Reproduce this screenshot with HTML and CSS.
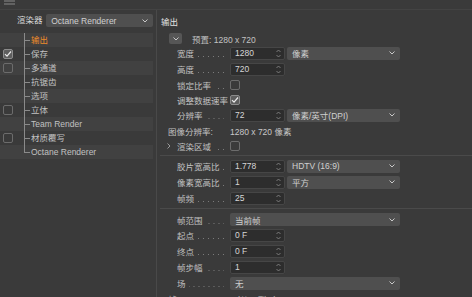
FILE: index.html
```html
<!DOCTYPE html>
<html>
<head>
    <title>渲染设置</title>
    <link rel="stylesheet" href="styles.css">
</head>
<body>
    <div class="topbar">
        <svg class="menu-icon" width="12" height="6" viewBox="0 0 12 6"><path d="M0 1H11M0 4H11" stroke="#8a8a8a" stroke-width="1"/></svg>
    </div>
    <div class="main">
        <div class="side">
            <div class="renderer">
                <span class="renderer-label">渲染器</span>
                <div class="select renderer-select">
                    <span>Octane Renderer</span>
                    <svg class="chev" width="6" height="4" viewBox="0 0 6 4"><path d="M0.5 0.5L3 3L5.5 0.5" fill="none" stroke="#c8c8c8"/></svg>
                </div>
            </div>
            <ul class="tree">
                <li class="tree-row"><span class="check-cell"></span><span class="node active">输出</span></li>
                <li class="tree-row"><span class="check-cell"><span class="checkbox checked"><svg width="8" height="8" viewBox="0 0 8 8"><path d="M1 4.2L3 6.2L7 1.5" fill="none" stroke="#ececec" stroke-width="1.2"/></svg></span></span><span class="node">保存</span></li>
                <li class="tree-row"><span class="check-cell"><span class="checkbox"></span></span><span class="node">多通道</span></li>
                <li class="tree-row"><span class="check-cell"></span><span class="node">抗锯齿</span></li>
                <li class="tree-row"><span class="check-cell"></span><span class="node">选项</span></li>
                <li class="tree-row"><span class="check-cell"><span class="checkbox"></span></span><span class="node">立体</span></li>
                <li class="tree-row"><span class="check-cell"></span><span class="node">Team Render</span></li>
                <li class="tree-row"><span class="check-cell"><span class="checkbox"></span></span><span class="node">材质覆写</span></li>
                <li class="tree-row last"><span class="check-cell"></span><span class="node">Octane Renderer</span></li>
            </ul>
        </div>

        <div class="panel">
            <div class="panel-title">输出</div>
            <div class="preset">
                <span class="preset-btn"><svg width="6" height="4" viewBox="0 0 6 4"><path d="M0.5 0.5L3 3L5.5 0.5" fill="none" stroke="#c8c8c8"/></svg></span>
                <span>预置: 1280 x 720</span>
            </div>

            <div class="row">
                <label class="lbl"><span>宽度</span><i class="dots"></i></label>
                <div class="num"><span>1280</span><svg class="spin" width="5" height="9" viewBox="0 0 5 9"><path d="M0.5 3L2.5 1L4.5 3M0.5 6L2.5 8L4.5 6" fill="none" stroke="#8e8e8e" stroke-width="0.8"/></svg></div>
                <div class="select"><span>像素</span><svg class="chev" width="6" height="4" viewBox="0 0 6 4"><path d="M0.5 0.5L3 3L5.5 0.5" fill="none" stroke="#c8c8c8"/></svg></div>
            </div>
            <div class="row">
                <label class="lbl"><span>高度</span><i class="dots"></i></label>
                <div class="num"><span>720</span><svg class="spin" width="5" height="9" viewBox="0 0 5 9"><path d="M0.5 3L2.5 1L4.5 3M0.5 6L2.5 8L4.5 6" fill="none" stroke="#8e8e8e" stroke-width="0.8"/></svg></div>
            </div>
            <div class="row short">
                <label class="lbl"><span>锁定比率</span><i class="dots"></i></label>
                <span class="checkbox"></span>
            </div>
            <div class="row short">
                <label class="lbl"><span>调整数据速率</span><i class="dots"></i></label>
                <span class="checkbox checked"><svg width="8" height="8" viewBox="0 0 8 8"><path d="M1 4.2L3 6.2L7 1.5" fill="none" stroke="#ececec" stroke-width="1.2"/></svg></span>
            </div>
            <div class="row">
                <label class="lbl"><span>分辨率</span><i class="dots"></i></label>
                <div class="num"><span>72</span><svg class="spin" width="5" height="9" viewBox="0 0 5 9"><path d="M0.5 3L2.5 1L4.5 3M0.5 6L2.5 8L4.5 6" fill="none" stroke="#8e8e8e" stroke-width="0.8"/></svg></div>
                <div class="select"><span>像素/英寸(DPI)</span><svg class="chev" width="6" height="4" viewBox="0 0 6 4"><path d="M0.5 0.5L3 3L5.5 0.5" fill="none" stroke="#c8c8c8"/></svg></div>
            </div>
            <div class="row short static">
                <span class="lbl">图像分辨率:</span>
                <span class="value">1280 x 720 像素</span>
            </div>
            <div class="row short toggle-row">
                <span class="toggle"><svg width="4" height="6" viewBox="0 0 4 6"><path d="M0.5 0.5L3 3L0.5 5.5" fill="none" stroke="#9a9a9a"/></svg></span>
                <label class="lbl"><span>渲染区域</span><i class="dots"></i></label>
                <span class="checkbox"></span>
            </div>

            <div class="sep"></div>

            <div class="row">
                <label class="lbl"><span>胶片宽高比</span><i class="dots"></i></label>
                <div class="num"><span>1.778</span><svg class="spin" width="5" height="9" viewBox="0 0 5 9"><path d="M0.5 3L2.5 1L4.5 3M0.5 6L2.5 8L4.5 6" fill="none" stroke="#8e8e8e" stroke-width="0.8"/></svg></div>
                <div class="select"><span>HDTV (16:9)</span><svg class="chev" width="6" height="4" viewBox="0 0 6 4"><path d="M0.5 0.5L3 3L5.5 0.5" fill="none" stroke="#c8c8c8"/></svg></div>
            </div>
            <div class="row">
                <label class="lbl"><span>像素宽高比</span><i class="dots"></i></label>
                <div class="num"><span>1</span><svg class="spin" width="5" height="9" viewBox="0 0 5 9"><path d="M0.5 3L2.5 1L4.5 3M0.5 6L2.5 8L4.5 6" fill="none" stroke="#8e8e8e" stroke-width="0.8"/></svg></div>
                <div class="select"><span>平方</span><svg class="chev" width="6" height="4" viewBox="0 0 6 4"><path d="M0.5 0.5L3 3L5.5 0.5" fill="none" stroke="#c8c8c8"/></svg></div>
            </div>
            <div class="row">
                <label class="lbl"><span>帧频</span><i class="dots"></i></label>
                <div class="num"><span>25</span><svg class="spin" width="5" height="9" viewBox="0 0 5 9"><path d="M0.5 3L2.5 1L4.5 3M0.5 6L2.5 8L4.5 6" fill="none" stroke="#8e8e8e" stroke-width="0.8"/></svg></div>
            </div>

            <div class="sep sep-2"></div>

            <div class="row short">
                <label class="lbl"><span>帧范围</span><i class="dots"></i></label>
                <div class="select wide"><span>当前帧</span><svg class="chev" width="6" height="4" viewBox="0 0 6 4"><path d="M0.5 0.5L3 3L5.5 0.5" fill="none" stroke="#c8c8c8"/></svg></div>
            </div>
            <div class="row">
                <label class="lbl"><span>起点</span><i class="dots"></i></label>
                <div class="num"><span>0 F</span><svg class="spin" width="5" height="9" viewBox="0 0 5 9"><path d="M0.5 3L2.5 1L4.5 3M0.5 6L2.5 8L4.5 6" fill="none" stroke="#8e8e8e" stroke-width="0.8"/></svg></div>
            </div>
            <div class="row">
                <label class="lbl"><span>终点</span><i class="dots"></i></label>
                <div class="num"><span>0 F</span><svg class="spin" width="5" height="9" viewBox="0 0 5 9"><path d="M0.5 3L2.5 1L4.5 3M0.5 6L2.5 8L4.5 6" fill="none" stroke="#8e8e8e" stroke-width="0.8"/></svg></div>
            </div>
            <div class="row">
                <label class="lbl"><span>帧步幅</span><i class="dots"></i></label>
                <div class="num"><span>1</span><svg class="spin" width="5" height="9" viewBox="0 0 5 9"><path d="M0.5 3L2.5 1L4.5 3M0.5 6L2.5 8L4.5 6" fill="none" stroke="#8e8e8e" stroke-width="0.8"/></svg></div>
            </div>
            <div class="row">
                <label class="lbl"><span>场</span><i class="dots"></i></label>
                <div class="select wide"><span>无</span><svg class="chev" width="6" height="4" viewBox="0 0 6 4"><path d="M0.5 0.5L3 3L5.5 0.5" fill="none" stroke="#c8c8c8"/></svg></div>
            </div>
            <div class="row static">
                <span class="lbl">帧:</span>
                <span class="value">1 (从 0 到 0)</span>
            </div>
        </div>
    </div>
</body>
</html>
```

FILE: styles.css
```css
body {
    margin: 0;
    padding: 0;
    width: 472px;
    height: 297px;
    overflow: hidden;
    background-color: #3a3a3a;
    color: #c2c2c2;
    font-family: "Liberation Sans", "Noto Sans CJK SC", sans-serif;
    font-size: 8.5px;
}

.topbar {
    height: 9px;
    border-bottom: 1px solid #434343;
}

.menu-icon {
    display: block;
    margin-left: 4px;
}

.main {
    display: flex;
    height: 287px;
}

/* left column: renderer choice and page tree */
.side {
    width: 153px;
    padding-right: 3px;
    border-right: 1px solid #494949;
}

.renderer {
    display: flex;
    align-items: flex-start;
    height: 19px;
    padding-top: 4px;
    padding-left: 17px;
}

.renderer-label {
    width: 29px;
    line-height: 13px;
    color: #dcdcdc;
}

.renderer-select {
    width: 89px;
    margin-left: 0;
    padding-left: 6px;
}

.tree {
    list-style: none;
    margin: 0;
    padding: 0;
}

.tree-row {
    display: flex;
    align-items: center;
    height: 14px;
}

.tree-row:nth-child(odd) {
    background-color: #414141;
}

.check-cell {
    display: flex;
    align-items: center;
    width: 24px;
    height: 14px;
    padding-left: 3px;
    box-sizing: border-box;
}

.node {
    position: relative;
    height: 14px;
    line-height: 14px;
    padding-left: 7px;
}

.node::before {
    content: "";
    position: absolute;
    left: 0;
    top: 0;
    bottom: 0;
    width: 1px;
    background-color: #8a8a8a;
}

.node::after {
    content: "";
    position: absolute;
    left: 0;
    top: 7px;
    width: 6px;
    height: 1px;
    background-color: #8a8a8a;
}

.last .node::before {
    bottom: 7px;
}

.node.active {
    color: #ee8b2b;
}

.checkbox {
    display: flex;
    align-items: center;
    justify-content: center;
    width: 10px;
    height: 10px;
    box-sizing: border-box;
    border: 1px solid #6c6c6c;
    border-radius: 2px;
}

.checkbox.checked {
    background-color: #5e5e5e;
    border-color: #8c8c8c;
}

/* right column: output settings */
.panel {
    flex: 1;
    padding-left: 4px;
}

.panel-title {
    height: 20px;
    line-height: 20px;
    padding-top: 2px;
    color: #e2e2e2;
}

.preset {
    display: flex;
    align-items: center;
    height: 13px;
    padding-left: 8px;
    gap: 10px;
}

.preset-btn {
    display: flex;
    align-items: center;
    justify-content: center;
    width: 13px;
    height: 11px;
    background-color: #565656;
    border-radius: 2px;
}

.row {
    display: flex;
    align-items: center;
    height: 16px;
    padding-left: 16px;
}

.row.short {
    height: 15px;
}

.lbl {
    display: flex;
    align-items: baseline;
    width: 53px;
    flex-shrink: 0;
    white-space: nowrap;
}

.dots {
    flex: 1;
    height: 1px;
    margin: 0 6px 0 3px;
    background-image: linear-gradient(to left, #7c7c7c 1px, transparent 1px);
    background-size: 5px 1px;
    background-position: right top;
    background-repeat: repeat-x;
}

.row.static {
    padding-left: 7px;
}

.row.static .lbl {
    width: 62px;
}

.toggle-row {
    padding-left: 2px;
}

.toggle {
    display: flex;
    align-items: center;
    width: 14px;
    padding-left: 4px;
    box-sizing: border-box;
}

.value {
    color: #c8c8c8;
}

.num {
    display: flex;
    align-items: center;
    justify-content: space-between;
    width: 55px;
    height: 13px;
    box-sizing: border-box;
    padding: 0 3px 0 4px;
    background-color: #2d2d2d;
    border: 1px solid #464646;
    border-radius: 2px;
    color: #d6d6d6;
}

.select {
    display: flex;
    align-items: center;
    justify-content: space-between;
    width: 113px;
    height: 13px;
    box-sizing: border-box;
    margin-left: 2px;
    padding: 0 5px;
    background-color: #4f4f4f;
    border-radius: 2px;
    color: #d0d0d0;
    white-space: nowrap;
}

.select.wide {
    width: 170px;
    margin-left: 0;
}

.sep {
    height: 1px;
    margin: 2px 0 2px -1px;
    background-color: #4a4a4a;
}

.sep-2 {
    margin-bottom: 3px;
}
```
